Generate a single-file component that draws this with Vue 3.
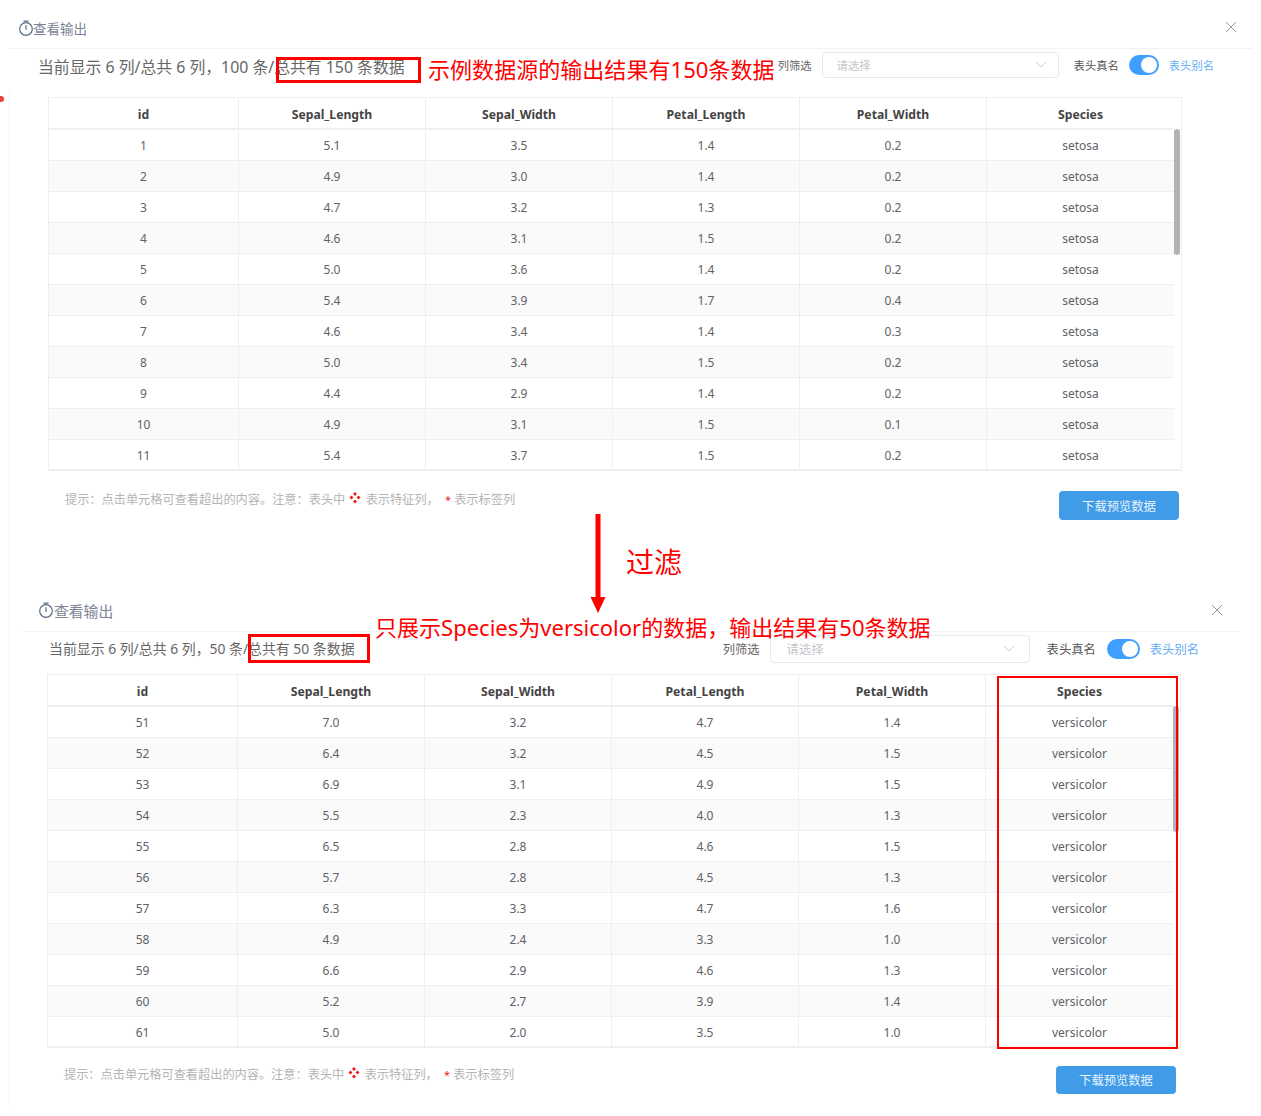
<script setup>
const rowsA = [
  [1,'5.1','3.5','1.4','0.2','setosa'],[2,'4.9','3.0','1.4','0.2','setosa'],[3,'4.7','3.2','1.3','0.2','setosa'],
  [4,'4.6','3.1','1.5','0.2','setosa'],[5,'5.0','3.6','1.4','0.2','setosa'],[6,'5.4','3.9','1.7','0.4','setosa'],
  [7,'4.6','3.4','1.4','0.3','setosa'],[8,'5.0','3.4','1.5','0.2','setosa'],[9,'4.4','2.9','1.4','0.2','setosa'],
  [10,'4.9','3.1','1.5','0.1','setosa'],[11,'5.4','3.7','1.5','0.2','setosa']
]
const rowsB = [
  [51,'7.0','3.2','4.7','1.4'],[52,'6.4','3.2','4.5','1.5'],[53,'6.9','3.1','4.9','1.5'],[54,'5.5','2.3','4.0','1.3'],
  [55,'6.5','2.8','4.6','1.5'],[56,'5.7','2.8','4.5','1.3'],[57,'6.3','3.3','4.7','1.6'],[58,'4.9','2.4','3.3','1.0'],
  [59,'6.6','2.9','4.6','1.3'],[60,'5.2','2.7','3.9','1.4'],[61,'5.0','2.0','3.5','1.0']
].map(r => [...r, 'versicolor'])
const headers = ['id','Sepal_Length','Sepal_Width','Petal_Length','Petal_Width','Species']
const panels = [
  { key: 'p1', info: '当前显示 6 列/总共 6 列，100 条/总共有 150 条数据', rows: rowsA },
  { key: 'p2', info: '当前显示 6 列/总共 6 列，50 条/总共有 50 条数据', rows: rowsB }
]
</script>

<template>
  <div class="page">
    <section v-for="p in panels" :key="p.key" class="panel" :class="p.key">
      <header class="head">
        <div class="title">
          <svg class="clock" viewBox="0 0 16 16" fill="none" stroke="#5a6a86" stroke-width="1.2">
            <circle cx="8" cy="9" r="6.3" />
            <path d="M6 1.2h4M8 5.500v3.800" stroke-linecap="round" />
          </svg>
          <span>查看输出</span>
        </div>
        <svg class="close" viewBox="0 0 12 12" fill="none" stroke="#9a9a9a" stroke-width="1"><path d="M1 1l10 10M11 1L1 11" /></svg>
      </header>
      <div class="toolbar">
        <span class="info">{{ p.info }}</span>
        <div class="controls">
          <span class="filter-label">列筛选</span>
          <div class="select">
            <span>请选择</span>
            <svg class="chev" viewBox="0 0 12 7" fill="none" stroke="#c4c8d0" stroke-width="1"><path d="M1 1l5 5 5-5" /></svg>
          </div>
          <span class="real">表头真名</span>
          <span class="switch"><i></i></span>
          <span class="alias">表头别名</span>
        </div>
      </div>
      <div class="table">
        <div class="tr th">
          <div v-for="h in headers" :key="h" class="td">{{ h }}</div>
        </div>
        <div v-for="(r, i) in p.rows" :key="i" class="tr" :class="{ even: i % 2 === 1 }">
          <div v-for="(c, j) in r" :key="j" class="td">{{ c }}</div>
        </div>
        <span class="thumb"></span>
      </div>
      <footer class="foot">
        <p class="tip">
          提示：点击单元格可查看超出的内容。注意：表头中
          <svg class="mark" viewBox="0 0 12 12" fill="#f01c1c">
            <path d="M6 0l2 2-2 2-2-2zM2.500 3.500l2 2-2 2-2-2zM9.500 3.500l2 2-2 2-2-2zM6 7.500l2 2-2 2-2-2z" />
          </svg>
          表示特征列，
          <em>*</em> 表示标签列
        </p>
        <button class="download" type="button">下载预览数据</button>
      </footer>
    </section>

    <!-- annotations drawn over the screenshot -->
    <span class="edge"></span>
    <span class="dot"></span>
    <span class="box box-a"></span>
    <span class="box box-b"></span>
    <span class="box box-c"></span>
    <span class="note note-a">示例数据源的输出结果有150条数据</span>
    <span class="note note-b">过滤</span>
    <span class="note note-c">只展示Species为versicolor的数据，输出结果有50条数据</span>
    <svg class="arrow" viewBox="0 0 16 100" fill="#ff0000">
      <path d="M5.500 0h5v84h-5zM0.500 83h15l-7.500 16z" />
    </svg>
  </div>
</template>

<style>
html, body { margin: 0; background: #fff; }
</style>

<style scoped>
.page {
  position: relative;
  width: 1261px;
  height: 1116px;
  overflow: hidden;
  background: #fff;
  font-family: "Noto Sans", "Noto Sans CJK SC", sans-serif;
  color: #606266;
}
.panel { display: flex; flex-direction: column; }
.p1 { height: 583px; }
.p2 { height: 533px; }

.head {
  height: 49px;
  box-sizing: border-box;
  display: flex;
  align-items: center;
  justify-content: space-between;
  border-bottom: 1px solid #f3f3f5;
}
.p1 .head { margin: 0 9px 0 8px; padding: 19px 15px 11px 10px; }
.p2 .head { margin: 0 21px 0 22px; padding: 15px 17px 9px 16px; }
.title { display: flex; align-items: center; color: #7b8494; }
.p1 .title { font-size: 13.500px; }
.p2 .title { font-size: 14.800px; }
.clock { width: 16px; height: 16px; flex: none; margin-top: -1px; }
.p1 .clock { margin-right: -1px; }
.close { width: 12px; height: 12px; margin-top: -3px; }
.p2 .close { margin-top: -1px; }

.toolbar { display: flex; align-items: center; }
.p1 .toolbar { height: 48px; padding: 0 47px 0 38px; }
.p2 .toolbar { height: 42px; padding: 0 62px 0 49px; }
.info { color: #666; white-space: nowrap; }
.p1 .info { font-size: 15.850px; margin-top: -13px; }
.p2 .info { font-size: 13.900px; margin-top: -11px; }
.controls { margin-left: auto; display: flex; align-items: center; }
.p1 .controls { font-size: 11.300px; margin-top: -17px; }
.p2 .controls { font-size: 12.300px; margin-top: -9px; }
.filter-label { color: #666; }
.select {
  box-sizing: border-box;
  display: flex;
  align-items: center;
  justify-content: space-between;
  border: 1px solid #e6e8ee;
  border-radius: 4px;
  color: #c4c6cb;
}
.p1 .select { width: 237px; height: 26px; margin: 0 15px 0 10px; padding: 0 11px 0 14px; }
.p2 .select { width: 260px; height: 28px; margin: 0 17px 0 10px; padding: 0 14px 0 16px; }
.chev { width: 12px; height: 7px; }
.real { color: #555; }
.alias { color: #64aef5; }
.switch { position: relative; display: block; height: 20px; border-radius: 10px; background: #409eff; }
.p1 .switch { width: 30px; margin: 0 10px; }
.p2 .switch { width: 33px; margin: 0 10px 0 11px; }
.switch i { position: absolute; top: 2px; right: 2px; width: 16px; height: 16px; border-radius: 50%; background: #fff; }

.table {
  position: relative;
  box-sizing: border-box;
  width: 1134px;
  height: 374px;
  overflow: hidden;
  border: 1px solid #eeeef4;
  border-bottom-width: 2px;
  font-size: 12px;
}
.p1 .table { margin-left: 48px; }
.p2 .table { margin-left: 47px; }
.tr {
  display: grid;
  grid-template-columns: 190px 187px 187px 187px 187px 187px;
  height: 31px;
  box-sizing: border-box;
  border-bottom: 1px solid #eeeef4;
  width: 1125px;
}
.tr.even { background: #fafafa; }
.th { height: 32px; border-bottom-width: 2px; font-weight: 700; color: #444; font-size: 12.200px; }
.th .td { padding-top: 2px; }
.td {
  display: flex;
  align-items: center;
  justify-content: center;
  border-right: 1px solid #eeeef4;
}
.td:last-child { border-right: 0; }
.thumb { position: absolute; right: 1px; top: 31px; width: 6px; height: 126px; border-radius: 3px; background: #b2b2b2; }

.foot { display: flex; justify-content: space-between; align-items: flex-start; }
.p1 .foot { padding: 20px 3px 0 65px; margin-right: 79px; }
.p2 .foot { padding: 18px 5px 0 64px; margin-right: 80px; }
.tip { margin: 1px 0 0; font-size: 12.200px; line-height: 16px; color: #b4b4b4; }
.tip em { color: #f01c1c; font-style: normal; font-size: 11px; margin-left: 3px; }
.mark { width: 12px; height: 12px; vertical-align: 0; margin: 0 1px; }
.download {
  width: 120px;
  border: 0;
  border-radius: 4px;
  background: #419ce8;
  color: #e8f3fd;
  font-family: inherit;
  font-size: 12.300px;
  padding: 0;
}
.p1 .download { height: 29px; }
.p2 .download { height: 28px; }

.edge { position: absolute; left: 9px; top: 90px; width: 1px; height: 1015px; background: #f4f4f4; }
.dot { position: absolute; left: -2px; top: 96px; width: 6px; height: 6px; border-radius: 50%; background: #e8453c; }
.box { position: absolute; box-sizing: border-box; border: 3px solid #ff0000; }
.box-a { left: 276px; top: 57px; width: 145px; height: 26px; }
.box-b { left: 248px; top: 634px; width: 122px; height: 29px; }
.box-c { left: 997px; top: 676px; width: 181px; height: 373px; border-width: 2px; }
.note { position: absolute; color: #ff0000; white-space: nowrap; line-height: 1; }
.note-a { left: 428px; top: 58px; font-size: 22.050px; }
.note-b { left: 626px; top: 548px; font-size: 28px; }
.note-c { left: 375px; top: 616px; font-size: 22.030px; }
.arrow { position: absolute; left: 590px; top: 514px; width: 16px; height: 100px; }
</style>
